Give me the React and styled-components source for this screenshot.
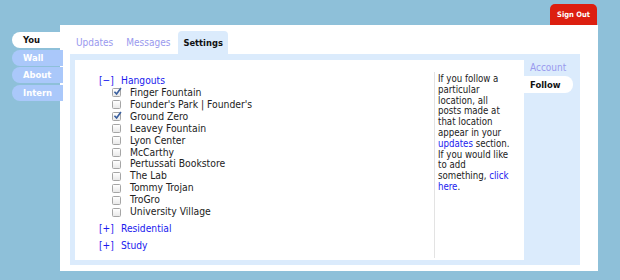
import React from "react";
import styled, { createGlobalStyle } from "styled-components";

const FONT = `"DejaVu Sans Condensed", "DejaVu Sans", sans-serif`;

const GlobalStyle = createGlobalStyle`
  html, body {
    margin: 0;
    padding: 0;
    background: #8ec0d9;
    font-family: ${FONT};
    color: #222;
  }
`;

const places = [
  { name: "Finger Fountain", checked: true },
  { name: "Founder's Park | Founder's", checked: false },
  { name: "Ground Zero", checked: true },
  { name: "Leavey Fountain", checked: false },
  { name: "Lyon Center", checked: false },
  { name: "McCarthy", checked: false },
  { name: "Pertussati Bookstore", checked: false },
  { name: "The Lab", checked: false },
  { name: "Tommy Trojan", checked: false },
  { name: "TroGro", checked: false },
  { name: "University Village", checked: false },
];

const CheckBox = ({ checked }) => (
  <Box>
    {checked && (
      <CheckMark viewBox="0 0 10 10">
        <path d="M1.6 5.2 L4 7.8 L8.8 1.2" fill="none" stroke="#3a5f9e" strokeWidth="1.8" />
      </CheckMark>
    )}
  </Box>
);

const App = () => {
  return (
    <>
      <GlobalStyle />
      <Page>
        <TopBar>
          <SignOut>Sign Out</SignOut>
        </TopBar>

        <SideNav>
          <SideTab $active>You</SideTab>
          <SideTab>Wall</SideTab>
          <SideTab>About</SideTab>
          <SideTab>Intern</SideTab>
        </SideNav>

        <Panel>
          <TabRow>
            <Tab>Updates</Tab>
            <Tab>Messages</Tab>
            <Tab $active>Settings</Tab>
          </TabRow>

          <TabBody>
            <Content>
              <ListArea>
                <Group>
                  <GroupHead>
                    <Toggle>[−]</Toggle>
                    <span>Hangouts</span>
                  </GroupHead>
                  {places.map((p) => (
                    <Item key={p.name}>
                      <CheckBox checked={p.checked} />
                      <span>{p.name}</span>
                    </Item>
                  ))}
                </Group>
                <Group>
                  <GroupHead>
                    <Toggle>[+]</Toggle>
                    <span>Residential</span>
                  </GroupHead>
                </Group>
                <Group>
                  <GroupHead>
                    <Toggle>[+]</Toggle>
                    <span>Study</span>
                  </GroupHead>
                </Group>
              </ListArea>
              <Help>
                If you follow a<br />
                particular<br />
                location, all<br />
                posts made at<br />
                that location<br />
                appear in your<br />
                <Link>updates</Link> section.<br />
                If you would like<br />
                to add<br />
                something, <Link>click</Link>
                <br />
                <Link>here</Link>.
              </Help>
            </Content>

            <SubNav>
              <SubTab>Account</SubTab>
              <SubTab $active>Follow</SubTab>
            </SubNav>
          </TabBody>
        </Panel>
      </Page>
    </>
  );
};

const Page = styled.div`
  display: grid;
  grid-template-columns: 48px 538px;
  grid-template-rows: 21px 246px;
  padding: 4px 0 0 12px;
`;

const TopBar = styled.div`
  grid-column: 2;
  grid-row: 1;
  display: flex;
  justify-content: flex-end;
  padding-right: 1px;
`;

const SignOut = styled.button`
  width: 47px;
  height: 21px;
  border: none;
  border-radius: 5px 5px 0 0;
  background: #dc1f10;
  color: #fff;
  font-family: ${FONT};
  font-size: 7.5px;
  font-weight: bold;
  padding: 0;
`;

const SideNav = styled.nav`
  grid-column: 1;
  grid-row: 2;
  display: flex;
  flex-direction: column;
  gap: 1.5px;
  margin-top: 7px;
  position: relative;
  z-index: 1;
`;

const SideTab = styled.div`
  height: 16px;
  width: ${(p) => (p.$active ? "48px" : "51px")};
  box-sizing: border-box;
  padding-left: 11px;
  border-radius: 8px 0 0 8px;
  background: ${(p) => (p.$active ? "#fff" : "#aac8fa")};
  color: ${(p) => (p.$active ? "#111" : "#fff")};
  font-size: 9.4px;
  font-weight: bold;
  line-height: 16px;
`;

const Panel = styled.main`
  grid-column: 2;
  grid-row: 2;
  background: #fff;
  padding: 6px 18px 6px 10px;
  display: flex;
  flex-direction: column;
`;

const TabRow = styled.div`
  display: flex;
  gap: 3px;
  padding-left: 1px;
  height: 23px;
`;

const Tab = styled.div`
  padding: 0 5px;
  border-radius: 4px 4px 0 0;
  background: ${(p) => (p.$active ? "#dbebfc" : "transparent")};
  color: ${(p) => (p.$active ? "#111" : "#9999ee")};
  font-size: ${(p) => (p.$active ? "9.3px" : "10px")};
  font-weight: ${(p) => (p.$active ? "bold" : "normal")};
  line-height: 23px;
`;

const TabBody = styled.section`
  flex: 1;
  background: #dbebfc;
  padding: 6px 0 5px 5px;
  display: flex;
`;

const Content = styled.div`
  width: 449px;
  background: #fff;
  display: flex;
`;

const ListArea = styled.div`
  width: 335px;
  padding: 15px 0 0 24px;
`;

const Group = styled.div`
  margin-bottom: 5px;
`;

const GroupHead = styled.div`
  display: flex;
  gap: 10px;
  color: #1a1aee;
  font-size: 10.2px;
  line-height: 12px;
`;

const Toggle = styled.span`
  width: 12px;
`;

const Item = styled.div`
  display: flex;
  align-items: center;
  gap: 9px;
  padding-left: 13px;
  font-size: 10.3px;
  line-height: 11.9px;
  color: #222;
`;

const Box = styled.span`
  position: relative;
  width: 7px;
  height: 7px;
  border: 1px solid #a5a5a5;
  border-radius: 1.5px;
  background: linear-gradient(#fff, #e9e9e9);
  flex: none;
`;

const CheckMark = styled.svg`
  position: absolute;
  left: -0.5px;
  top: -2px;
  width: 9px;
  height: 9px;
`;

const Help = styled.p`
  width: 84px;
  margin: 12px 0 2px;
  padding: 2px 0 0 3px;
  border-left: 1px solid #e3e3e3;
  font-size: 9.6px;
  line-height: 10.8px;
  white-space: nowrap;
  color: #222;
`;

const Link = styled.a`
  color: #1a1aee;
  cursor: pointer;
`;

const SubNav = styled.nav`
  display: flex;
  flex-direction: column;
  width: 56px;
`;

const SubTab = styled.div`
  height: ${(p) => (p.$active ? "17px" : "16px")};
  width: 49px;
  box-sizing: border-box;
  padding-left: 6px;
  border-radius: 0 8px 8px 0;
  background: ${(p) => (p.$active ? "#fff" : "transparent")};
  color: ${(p) => (p.$active ? "#111" : "#9999ee")};
  font-size: ${(p) => (p.$active ? "9.4px" : "10px")};
  font-weight: ${(p) => (p.$active ? "bold" : "normal")};
  line-height: ${(p) => (p.$active ? "17px" : "16px")};
`;

export default App;
